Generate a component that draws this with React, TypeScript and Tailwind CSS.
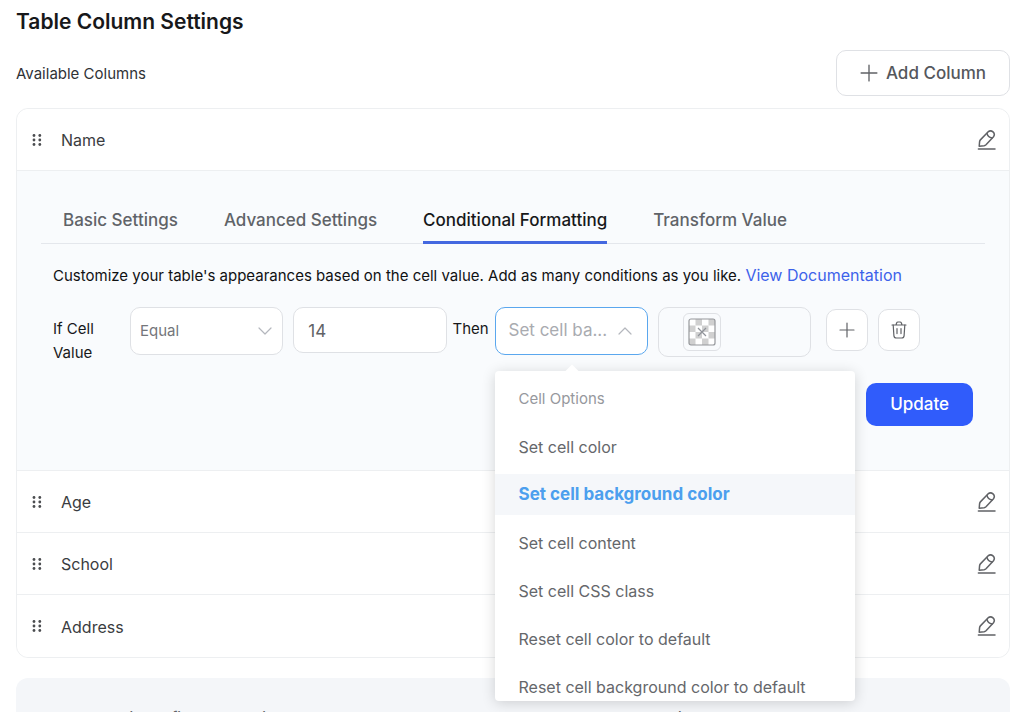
import React, { useState } from "react";

const tabs = ["Basic Settings", "Advanced Settings", "Conditional Formatting", "Transform Value"];

const cellOptions = [
  "Set cell color",
  "Set cell background color",
  "Set cell content",
  "Set cell CSS class",
  "Reset cell color to default",
  "Reset cell background color to default",
];

function DragIcon() {
  return (
    <svg className="h-3 w-3 shrink-0" viewBox="0 0 12 12" fill="#4b4d50">
      {[1.5, 6, 10.5].map((y) => (
        <g key={y}>
          <circle cx="3" cy={y} r="1.4" />
          <circle cx="8.8" cy={y} r="1.4" />
        </g>
      ))}
    </svg>
  );
}

function PencilIcon() {
  return (
    <svg className="h-5 w-5" viewBox="0 0 20 20" fill="none" stroke="#606266" strokeWidth="1.5" strokeLinejoin="round" strokeLinecap="round">
      <path d="M2.2 16.2 L2.6 11.6 Q2.8 10.4 3.6 9.6 L11 1.9 Q13.6 -0.2 16 1.9 Q18.4 4.3 16.5 6.8 L9 14.8 Q8.2 15.6 7.1 15.8 L2.2 16.2 Z" />
      <path d="M10 3.4 Q10.8 7.2 15 8" />
      <path d="M1.4 19.1 H18" />
    </svg>
  );
}

function PlusIcon({ className }: { className?: string }) {
  return (
    <svg className={className} viewBox="0 0 16 16" fill="none" stroke="#606266" strokeWidth="1.2" strokeLinecap="round">
      <path d="M8 1 V15 M1 8 H15" />
    </svg>
  );
}

function TrashIcon() {
  return (
    <svg className="h-[18px] w-4" viewBox="0 0 16 18" fill="none" stroke="#606266" strokeWidth="1.2" strokeLinecap="round" strokeLinejoin="round">
      <path d="M1 4 H15 M5 4 L5.6 2 Q6 1 7 1 H9 Q10 1 10.4 2 L11 4" />
      <path d="M2.2 4 L2.9 14.6 Q3.1 17 5.4 17 H10.6 Q12.9 17 13.1 14.6 L13.8 4" />
      <path d="M6 7.6 V12.6 M10 7.6 V12.6" />
    </svg>
  );
}

function Chevron({ up }: { up?: boolean }) {
  return (
    <svg className="h-2 w-[14px] shrink-0" viewBox="0 0 14 8" fill="none" stroke="#b4b7bd" strokeWidth="1.2" strokeLinecap="round" strokeLinejoin="round">
      <path d={up ? "M1 7 L7 1 L13 7" : "M1 1 L7 7 L13 1"} />
    </svg>
  );
}

function ColorSwatch() {
  const squares = [0, 1, 2, 3].flatMap((row) =>
    [0, 1, 2, 3].filter((col) => (row + col) % 2 === 1).map((col) => ({ row, col }))
  );
  return (
    <svg className="h-7 w-7" viewBox="0 0 28 28" fill="none">
      <rect x="1" y="1" width="26" height="26" fill="#fff" />
      {squares.map(({ row, col }) => (
        <rect key={`${row}-${col}`} x={1 + col * 6.5} y={1 + row * 6.5} width="6.5" height="6.5" fill="#d0d0d0" />
      ))}
      <rect x="1" y="1" width="26" height="26" rx="2" stroke="#96989c" strokeWidth="1.2" />
      <path d="M10 10 L18 18 M18 10 L10 18" stroke="#909399" strokeWidth="1.2" />
    </svg>
  );
}

function ColumnRow({ name }: { name: string }) {
  return (
    <div className="flex h-[62px] items-center bg-white pl-[14px] pr-3">
      <DragIcon />
      <span className="ml-[18px] flex-1 pt-px text-[16px] text-[#3a3c40]">{name}</span>
      <button type="button" aria-label={`Edit ${name}`}>
        <PencilIcon />
      </button>
    </div>
  );
}

export default function App() {
  const [activeTab, setActiveTab] = useState("Conditional Formatting");
  const [action, setAction] = useState("Set cell background color");
  const [value, setValue] = useState("14");

  return (
    <div className="h-screen overflow-hidden bg-white pl-4 pr-[14px] font-['Inter','Liberation_Sans',sans-serif] text-[#17181a]">
      <h1 className="pt-2 text-[21px] leading-7 font-semibold">Table Column Settings</h1>

      <div className="mt-[14px] flex items-center justify-between">
        <h2 className="pt-[2px] text-[15px] text-[#303236]">Available Columns</h2>
        <button type="button" className="flex h-[46px] items-center gap-2 rounded-[10px] border border-[#dfe1e5] px-[23px] text-[17px] font-medium text-[#55575c]">
          <PlusIcon className="h-[18px] w-[18px]" />
          <span className="pt-px">Add Column</span>
        </button>
      </div>

      <div className="mt-3 divide-y divide-[#edeff1] rounded-xl border border-[#edeff1] [&>*:first-child]:rounded-t-xl [&>*:last-child]:rounded-b-xl">
        <ColumnRow name="Name" />

        {/* Expanded settings */}
        <div className="h-[300px] bg-[#f9fbfd] px-6 pt-[25px]">
          <div role="tablist" className="flex h-12 gap-[46px] border-b border-[#e4e7ec] px-[22px]">
            {tabs.map((tab) => (
              <button
                key={tab}
                type="button"
                role="tab"
                aria-selected={tab === activeTab}
                onClick={() => setActiveTab(tab)}
                className={`-mb-px h-12 shrink-0 whitespace-nowrap border-b-[3px] pt-[5px] text-[17px] font-medium ${
                  tab === activeTab ? "border-[#4468e0] text-[#17181a]" : "border-transparent text-[#606368]"
                }`}
              >
                {tab}
              </button>
            ))}
          </div>

          <div className="px-3">
            <p className="mt-[19px] text-[15px] leading-6 whitespace-nowrap text-[#101113]">
              Customize your table's appearances based on the cell value. Add as many conditions as you like.{" "}
              <a href="#docs" className="text-[16px] text-[#3d62ea]">View Documentation</a>
            </p>

            <div className="mt-[19px] flex items-start text-[15px]">
              <span className="mt-[10px] w-[77px] shrink-0 leading-6">If Cell<br />Value</span>
              <div className="min-w-0 flex-1">
                <button type="button" aria-label="Condition: Equal" className="flex h-12 w-full items-center justify-between rounded-[10px] border border-[#dfe1e5] bg-white pl-[9px] pr-[10px] text-[#74767b]">
                  Equal
                  <Chevron />
                </button>
              </div>
              <div className="ml-[10px] min-w-0 flex-1">
                <input
                  aria-label="Cell value"
                  value={value}
                  onChange={(e) => setValue(e.target.value)}
                  className="block h-[46px] w-full rounded-[10px] border border-[#dfe1e5] bg-white px-[14px] pt-px text-[17px] text-[#606266]"
                />
              </div>
              <span className="mt-[10px] w-12 shrink-0 pl-[6px] leading-6">Then</span>

              <div className="relative min-w-0 flex-1">
                <button type="button" aria-haspopup="listbox" aria-expanded="true" className="flex h-12 w-full items-center justify-between rounded-[10px] border border-[#5aa7ee] bg-white pl-[13px] pr-[15px] text-[17px] whitespace-nowrap text-[#a9abb0]">
                  Set cell ba...
                  <Chevron up />
                </button>

                <div className="absolute top-16 left-0 z-10 w-[360px] rounded-[4px] bg-white shadow-[0_2px_14px_rgba(0,0,0,0.16)]">
                  <div className="absolute -top-1 left-[71px] h-3 w-3 rotate-45 bg-white" />
                  <div role="listbox" aria-label="Cell Options" className="relative h-[330px] overflow-hidden pt-2">
                    <div className="h-10 px-6 text-[15px] leading-10 text-[#96989d]">Cell Options</div>
                    {cellOptions.map((option) => (
                      <button
                        key={option}
                        type="button"
                        role="option"
                        aria-selected={option === action}
                        onClick={() => setAction(option)}
                        className={`mt-[7px] block h-[41px] w-full px-6 pt-px text-left whitespace-nowrap ${
                          option === action ? "bg-[#f5f7fa] text-[17px] font-bold text-[#4c9fee]" : "text-[16px] text-[#65676b]"
                        }`}
                      >
                        {option}
                      </button>
                    ))}
                  </div>
                </div>
              </div>

              <div className="ml-[10px] min-w-0 flex-1">
                <div className="flex h-[50px] items-center rounded-[10px] border border-[#dfe1e5] pl-6">
                  <button type="button" aria-label="Pick color" className="flex h-[38px] w-[38px] items-center justify-center rounded-md border border-[#dfe1e5]">
                    <ColorSwatch />
                  </button>
                </div>
              </div>
              <button type="button" aria-label="Add condition" className="mt-[2px] ml-[15px] flex h-[42px] w-[42px] shrink-0 items-center justify-center rounded-[10px] border border-[#dfe1e5] bg-white">
                <PlusIcon className="h-4 w-4" />
              </button>
              <button type="button" aria-label="Delete condition" className="mt-[2px] mr-[53px] ml-[10px] flex h-[42px] w-[42px] shrink-0 items-center justify-center rounded-[10px] border border-[#dfe1e5] bg-white">
                <TrashIcon />
              </button>
            </div>

            <div className="mt-[18px] flex justify-end">
              <button type="button" className="h-[43px] rounded-[10px] bg-[#305cfb] px-6 text-[17px] font-medium text-white">
                Update
              </button>
            </div>
          </div>
        </div>

        <ColumnRow name="Age" />
        <ColumnRow name="School" />
        <ColumnRow name="Address" />
      </div>

      <div className="mt-5 rounded-xl bg-[#f4f6f9] px-[60px] py-[28px] text-[15px] leading-6 text-[#606266]">
        No key is configured on this table, see how to manage the columns and rows by reading{" "}
        <a href="#docs" className="text-[#3d62ea]">the docs</a>
      </div>
    </div>
  );
}
